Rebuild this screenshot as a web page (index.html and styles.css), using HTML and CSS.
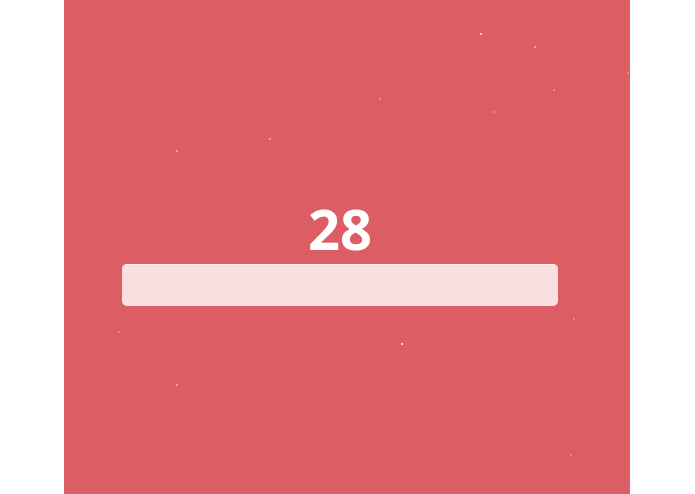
FILE: index.html
```html
<!DOCTYPE html>
<html>
<head>
<meta charset="utf-8">
<link rel="stylesheet" href="styles.css">
</head>
<body>
<div class="panel">
  <div class="stars">
    <span class="star bright" style="left:416px;top:33px"></span>
    <span class="star" style="left:470px;top:46px"></span>
    <span class="star dim" style="left:489px;top:89px"></span>
    <span class="star dim" style="left:563px;top:72px"></span>
    <span class="star dim" style="left:315px;top:98px"></span>
    <span class="star dim" style="left:429px;top:111px"></span>
    <span class="star" style="left:205px;top:138px"></span>
    <span class="star" style="left:112px;top:150px"></span>
    <span class="star bright" style="left:349px;top:298px"></span>
    <span class="star dim" style="left:509px;top:318px"></span>
    <span class="star dim" style="left:54px;top:331px"></span>
    <span class="star bright" style="left:337px;top:343px"></span>
    <span class="star" style="left:112px;top:384px"></span>
    <span class="star dim" style="left:506px;top:454px"></span>
  </div>
  <div class="content">
    <div class="count">28</div>
    <div class="bar"></div>
  </div>
</div>
</body>
</html>
```

FILE: styles.css
```css
html, body {
  margin: 0;
  padding: 0;
  background: #ffffff;
}
body {
  font-family: "Open Sans", "Liberation Sans", sans-serif;
  width: 695px;
  height: 494px;
  overflow: hidden;
}
.panel {
  position: relative;
  margin-left: 64px;
  width: 566px;
  height: 494px;
  background: #dc5d63;
  overflow: hidden;
}
.stars {
  position: absolute;
  inset: 0;
}
.star {
  position: absolute;
  width: 2px;
  height: 2px;
  border-radius: 1px;
  background: #ffffff;
  opacity: 0.55;
}
.star.bright {
  opacity: 0.9;
}
.star.dim {
  opacity: 0.35;
}
.content {
  position: relative;
  display: flex;
  flex-direction: column;
  align-items: stretch;
  width: 436px;
  margin-left: 58px;
  padding-top: 200px;
}
.count {
  font-size: 56px;
  line-height: 56px;
  font-weight: 700;
  color: #ffffff;
  text-align: center;
}
.bar {
  margin-top: 8px;
  height: 42px;
  border-radius: 5px;
  background: #f8dfe0;
  box-shadow: inset 0 1px 0 rgba(255,255,255,0.5);
}
```
